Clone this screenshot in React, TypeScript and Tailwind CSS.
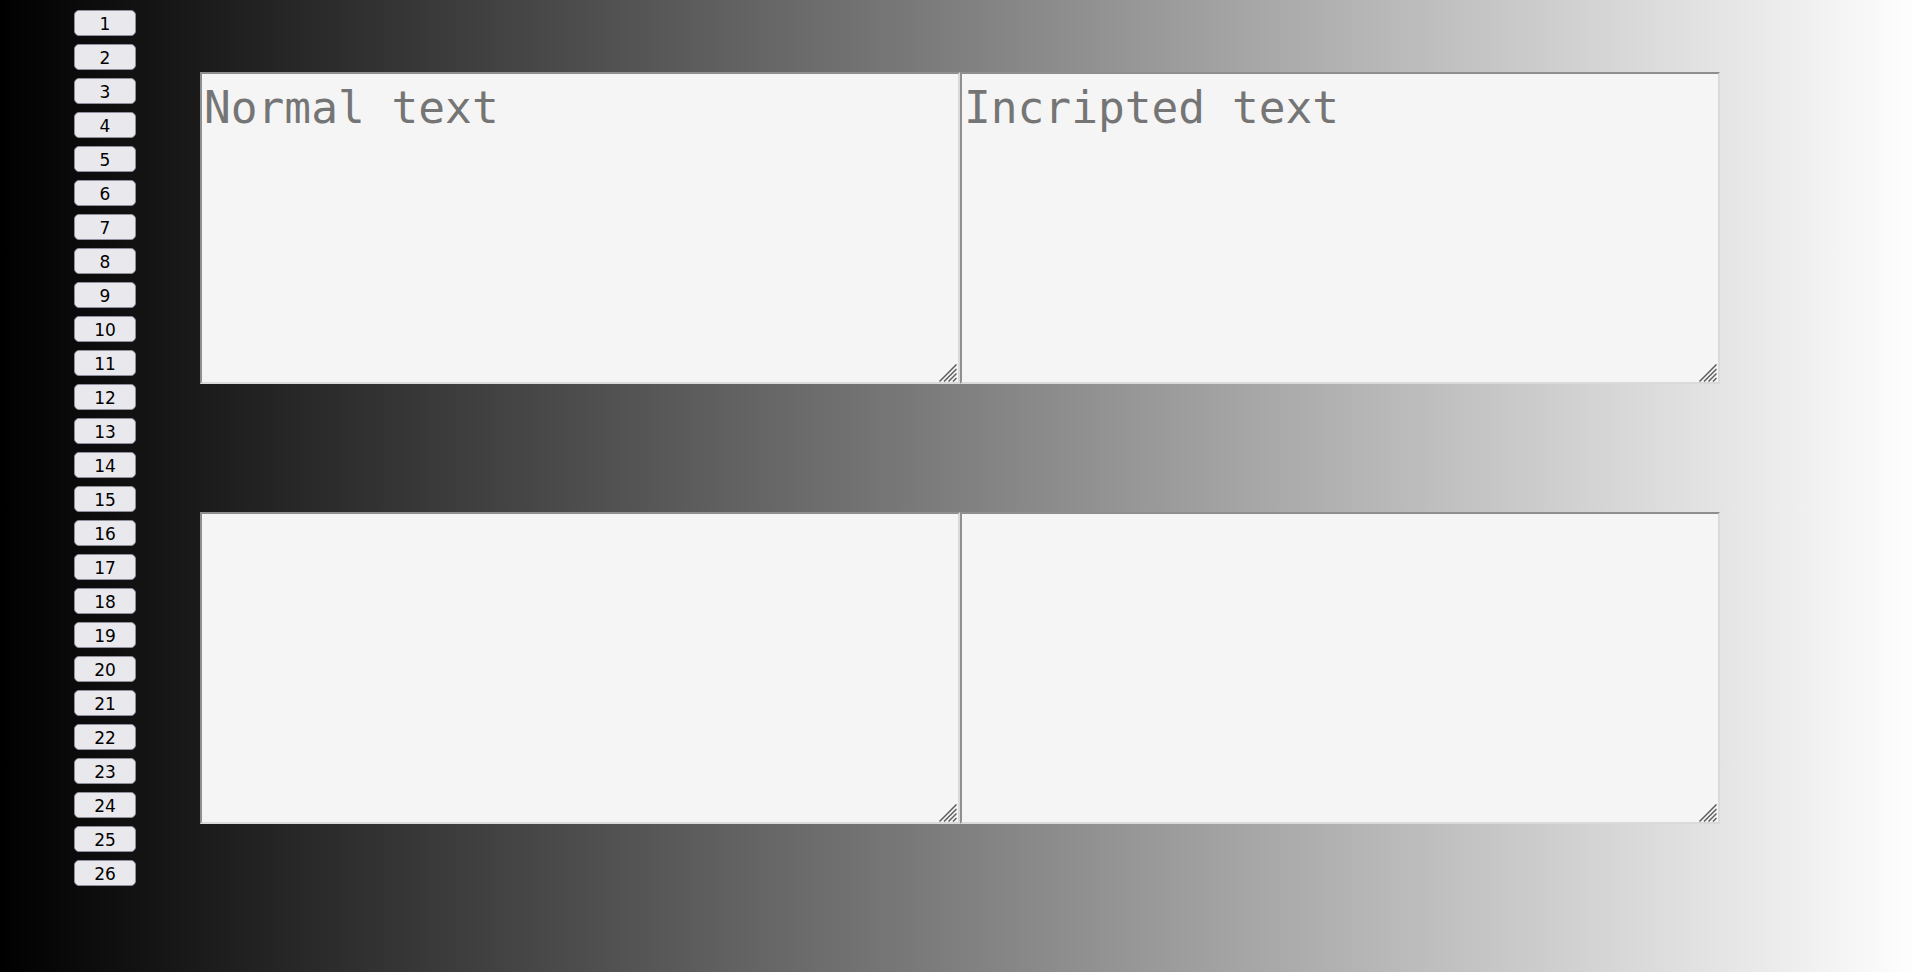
const keys = Array.from({ length: 26 }, (_, i) => i + 1);

function Pad({ placeholder }: { placeholder?: string }) {
  return (
    <div className="relative">
      <textarea
        placeholder={placeholder}
        className="block h-[312px] w-[760px] resize-none border-2 border-t-[#8f8f8f] border-l-[#8f8f8f] border-r-[#dadada] border-b-[#dadada] bg-[#f5f5f5] px-[2px] pt-[8px] text-[44.5px] leading-[1.164] text-[#333] placeholder:text-[#757575] outline-none [font-family:'DejaVu_Sans_Mono',monospace]"
      />
      {/* resize grip */}
      <svg
        className="pointer-events-none absolute bottom-[2px] right-[3px]"
        width="18"
        height="18"
        viewBox="0 0 18 18"
      >
        <g stroke="#5a5a5a" strokeWidth="1.5">
          <line x1="17.5" y1="0.5" x2="0.5" y2="17.5" />
          <line x1="17.5" y1="5" x2="5" y2="17.5" />
          <line x1="17.5" y1="9.5" x2="9.5" y2="17.5" />
          <line x1="17.5" y1="14" x2="14" y2="17.5" />
        </g>
      </svg>
    </div>
  );
}

export default function App() {
  return (
    <div className="flex h-[972px] w-full bg-[linear-gradient(to_right,#000,#fff)]">
      <div className="flex flex-col gap-[8px] pl-[74px] pt-[10px]">
        {keys.map((k) => (
          <button
            key={k}
            className="h-[26px] w-[62px] rounded-[5px] border border-[#8f8f9d] bg-[#e9e9ed] pt-[3px] text-[17px] leading-none text-black [font-family:'DejaVu_Sans',sans-serif]"
          >
            {k}
          </button>
        ))}
      </div>
      <div className="ml-[64px] flex flex-col gap-[128px] pt-[72px]">
        <div className="flex">
          <Pad placeholder="Normal text" />
          <Pad placeholder="Incripted text" />
        </div>
        <div className="flex">
          <Pad />
          <Pad />
        </div>
      </div>
    </div>
  );
}
